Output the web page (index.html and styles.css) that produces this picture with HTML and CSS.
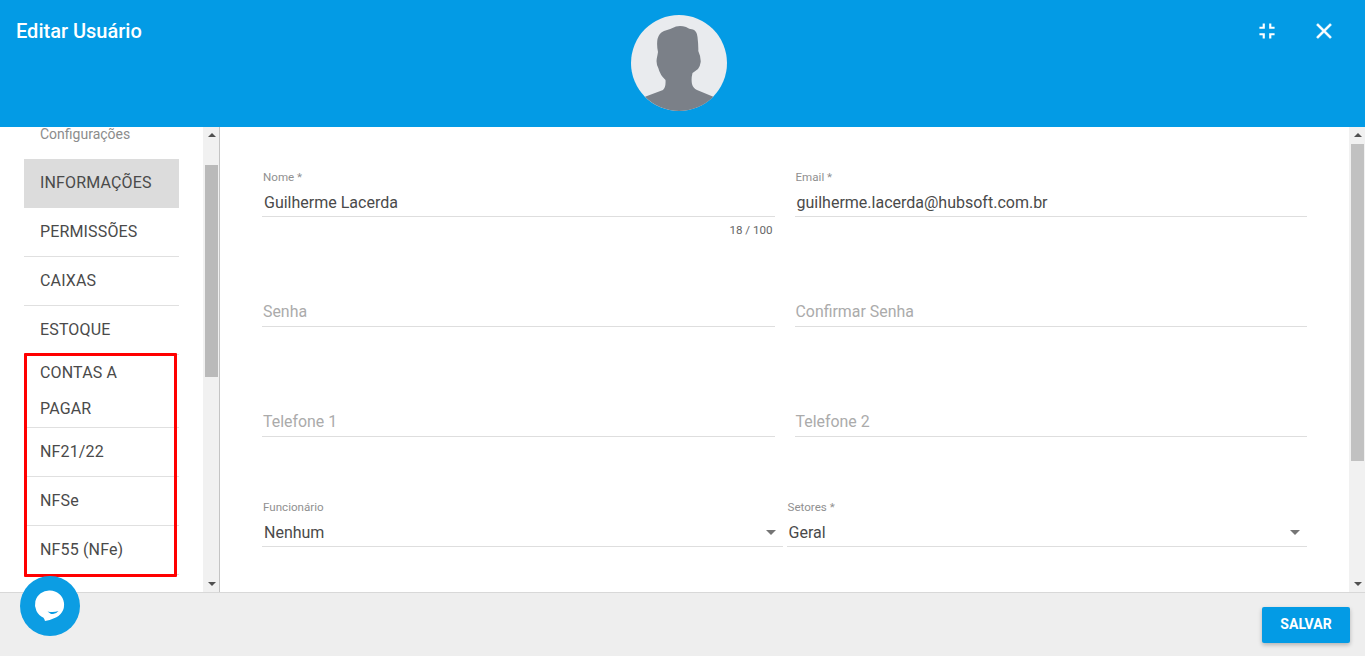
FILE: index.html
```html
<!DOCTYPE html>
<html lang="pt-BR">
<head>
<meta charset="utf-8">
<title>Editar Usuário</title>
<link rel="stylesheet" href="styles.css">
</head>
<body>
<div class="dialog">
  <header class="top">
    <h1 class="title">Editar Usuário</h1>
    <div class="avatar">
      <svg viewBox="0 0 96 96" width="96" height="96" aria-hidden="true">
        <circle cx="48" cy="48" r="48" fill="#e9ebee"/>
        <path fill="#7b8088" d="M14 81.7 L32 75 Q35 72 34.5 65 Q29 60 27.3 53 Q25 49 25.7 44 Q26.5 40 27 37 Q25.5 30 26.5 24 Q28 18 33 16 Q40 14 45 11.5 Q50 10.5 55 12 Q58 14 62 14.5 Q66 16 66.5 22 Q67.5 30 67.3 36 Q70 42 69.7 47 Q69 52 67 54 Q63 57 61.5 58 Q60 64 61 69 Q62 73 66 75 L82.3 81.7 A48 48 0 0 1 14 81.7 Z"/>
      </svg>
    </div>
    <div class="top-actions">
      <svg class="icon-exit" viewBox="0 0 24 24" width="26" height="26" aria-hidden="true"><path fill="#fff" d="M5 16h3v3h2v-5H5v2zm3-8H5v2h5V5H8v3zm6 11h2v-3h3v-2h-5v5zm2-11V5h-2v5h5V8h-3z"/></svg>
      <svg class="icon-close" viewBox="0 0 24 24" width="26" height="26" aria-hidden="true"><path fill="#fff" stroke="#fff" stroke-width=".4" d="M19 6.41L17.59 5 12 10.59 6.41 5 5 6.41 10.59 12 5 17.59 6.41 19 12 13.41 17.59 19 19 17.59 13.41 12z"/></svg>
    </div>
  </header>

  <div class="content">
    <aside class="sidebar">
      <nav class="menu">
        <div class="menu-heading">Configurações</div>
        <ul class="menu-list">
          <li class="menu-item active">INFORMAÇÕES</li>
          <li class="menu-item">PERMISSÕES</li>
          <li class="menu-item">CAIXAS</li>
          <li class="menu-item">ESTOQUE</li>
          <li class="menu-item tall">CONTAS A PAGAR</li>
          <li class="menu-item">NF21/22</li>
          <li class="menu-item">NFSe</li>
          <li class="menu-item">NF55 (NFe)</li>
        </ul>
        <div class="highlight"></div>
      </nav>
      <div class="scrollbar side-bar">
        <span class="arrow-up"></span>
        <span class="thumb side-thumb"></span>
        <span class="arrow-down"></span>
      </div>
    </aside>

    <main class="main">
      <form class="form">
        <div class="row">
          <div class="field">
            <span class="label">Nome *</span>
            <div class="control"><span class="value">Guilherme Lacerda</span></div>
            <div class="counter">18 / 100</div>
          </div>
          <div class="field">
            <span class="label">Email *</span>
            <div class="control"><span class="value">guilherme.lacerda@hubsoft.com.br</span></div>
          </div>
        </div>
        <div class="row">
          <div class="field">
            <span class="label"></span>
            <div class="control"><span class="placeholder">Senha</span></div>
          </div>
          <div class="field">
            <span class="label"></span>
            <div class="control"><span class="placeholder">Confirmar Senha</span></div>
          </div>
        </div>
        <div class="row">
          <div class="field">
            <span class="label"></span>
            <div class="control"><span class="placeholder">Telefone 1</span></div>
          </div>
          <div class="field">
            <span class="label"></span>
            <div class="control"><span class="placeholder">Telefone 2</span></div>
          </div>
        </div>
        <div class="row row-select">
          <div class="field">
            <span class="label">Funcionário</span>
            <div class="control select"><span class="value">Nenhum</span><span class="caret"></span></div>
          </div>
          <div class="field">
            <span class="label">Setores *</span>
            <div class="control select"><span class="value">Geral</span><span class="caret"></span></div>
          </div>
        </div>
      </form>
      <div class="scrollbar main-bar">
        <span class="arrow-up"></span>
        <span class="thumb main-thumb"></span>
        <span class="arrow-down"></span>
      </div>
    </main>
  </div>

  <footer class="bottom">
    <button class="save" type="button">SALVAR</button>
  </footer>

  <div class="chat">
    <svg viewBox="0 0 60 60" width="60" height="60" aria-hidden="true">
      <circle cx="30" cy="30" r="30" fill="#0c9de3"/>
      <path fill="#fff" d="M30 14.5 A14.2 14.2 0 0 1 34 42.3 Q30 44.5 25 45 Q24.5 43 23.5 41.7 A14.2 14.2 0 0 1 30 14.5 Z"/>
      <path fill="#0c9de3" d="M27.5 35.4 Q33 37 38.5 35 Q33.5 41 27.5 35.4 Z"/>
    </svg>
  </div>
</div>
</body>
</html>
```
FILE: styles.css
```css
* { box-sizing: border-box; }
html, body { margin: 0; height: 100%; overflow: hidden; }
body {
  font-family: Roboto, "Liberation Sans", sans-serif;
  color: #4a4a4a;
  background: #fff;
}
.dialog {
  position: relative;
  display: flex;
  flex-direction: column;
  height: 656px;
}

/* header */
.top {
  flex: 0 0 127px;
  display: flex;
  align-items: flex-start;
  background: #039be5;
  color: #fff;
}
.title {
  flex: 0 0 631px;
  margin: 0;
  padding: 19px 0 0 16px;
  font-size: 20px;
  line-height: 24px;
  font-weight: 500;
}
.avatar {
  flex: 0 0 96px;
  height: 96px;
  margin-top: 15px;
}
.avatar svg { display: block; }
.top-actions {
  flex: 1;
  display: flex;
  gap: 31px;
  padding: 18px 0 0 527px;
}
.top-actions svg { display: block; flex: none; }

/* content */
.content {
  flex: 1;
  display: flex;
  min-height: 0;
}
.sidebar {
  flex: 0 0 220px;
  display: flex;
}
.menu {
  position: relative;
  flex: 1;
  padding: 0 24px;
}
.menu-heading {
  height: 32px;
  padding-left: 16px;
  font-size: 14px;
  line-height: 15px;
  font-weight: 400;
  color: #8c8c8c;
}
.menu-list { margin: 0; padding: 0; list-style: none; }
.menu-item {
  padding: 6px 16px;
  font-size: 16px;
  line-height: 36px;
  letter-spacing: .15px;
  border-bottom: 1px solid #e0e0e0;
  color: #4a4a4a;
}
.menu-item.tall { padding: 0 16px; }
.menu-item.active {
  background: #dcdcdc;
  border-bottom-color: #dcdcdc;
}
.highlight {
  position: absolute;
  left: 24px;
  top: 226px;
  width: 153px;
  height: 224px;
  border: 3px solid #f00;
  border-radius: 1px;
}

/* scrollbars */
.scrollbar {
  position: relative;
  display: flex;
  flex-direction: column;
  align-items: center;
  background: #f1f1f1;
}
.side-bar {
  flex: 0 0 17px;
  padding-left: 1px;
  border-right: 1px solid #c4c4c4;
}
.main-bar { flex: 0 0 16px; padding-left: 1px; }
.arrow-up {
  width: 0;
  height: 0;
  margin-top: 6px;
  border-left: 4px solid transparent;
  border-right: 4px solid transparent;
  border-bottom: 4px solid #505050;
}
.arrow-down {
  width: 0;
  height: 0;
  margin-top: auto;
  margin-bottom: 6px;
  border-left: 4px solid transparent;
  border-right: 4px solid transparent;
  border-top: 4px solid #505050;
}
.thumb { display: block; background: #c1c1c1; width: 13px; }
.side-thumb { margin-top: 28px; height: 212px; background: #bababa; }
.main-thumb { margin-top: 7px; height: 317px; }

/* form */
.main {
  flex: 1;
  display: flex;
  min-width: 0;
}
.form {
  flex: 1;
  padding: 43px 42px 0;
}
.row {
  display: grid;
  grid-template-columns: 1fr 1fr;
  gap: 20px;
  height: 110px;
}
.row-select { gap: 4px; }
.field { min-width: 0; }
.label {
  display: block;
  height: 20px;
  padding-left: 1px;
  font-size: 11.6px;
  line-height: 14px;
  color: #909090;
}
.control {
  display: flex;
  align-items: center;
  height: 27px;
  padding: 0 2px 2px;
  border-bottom: 1px solid #dedede;
  font-size: 16px;
}
.value { color: #4a4a4a; }
.placeholder {
  margin: -2px 0 0 -1px;
  font-size: 15.9px;
  color: #ababab;
}
.select { justify-content: space-between; padding-right: 7px; }
.caret {
  width: 0;
  height: 0;
  border-left: 5px solid transparent;
  border-right: 5px solid transparent;
  border-top: 5px solid #757575;
}
.counter {
  padding: 6px 2px 0 0;
  text-align: right;
  font-size: 11.6px;
  line-height: 14px;
  color: #666;
}

/* footer */
.bottom {
  flex: 0 0 64px;
  display: flex;
  justify-content: flex-end;
  align-items: flex-start;
  padding: 14px 15px 0 0;
  background: #eee;
  border-top: 1px solid #d8d8d8;
}
.save {
  width: 88px;
  height: 36px;
  padding: 0 0 2px;
  border: 0;
  border-radius: 2px;
  background: #039be5;
  color: #fff;
  font-family: inherit;
  font-size: 14px;
  font-weight: 700;
  box-shadow: 0 2px 4px rgba(0, 0, 0, .25);
}

/* chat launcher */
.chat {
  position: absolute;
  left: 20px;
  top: 576px;
  width: 60px;
  height: 60px;
}
.chat svg { display: block; }
```
